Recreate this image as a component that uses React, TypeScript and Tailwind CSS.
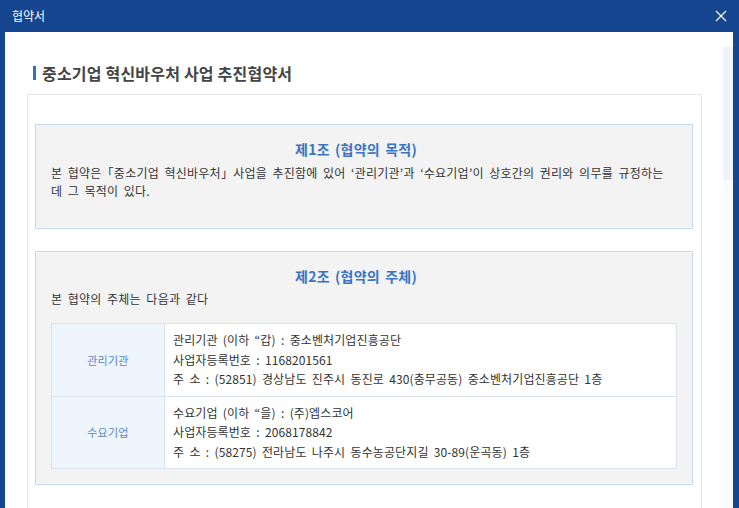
import React from "react";

const rows = [
  {
    label: "관리기관",
    lines: [
      "관리기관 (이하 “갑) : 중소벤처기업진흥공단",
      "사업자등록번호 : 1168201561",
      "주 소 : (52851) 경상남도 진주시 동진로 430(충무공동) 중소벤처기업진흥공단 1층",
    ],
  },
  {
    label: "수요기업",
    lines: [
      "수요기업 (이하 “을) : (주)엡스코어",
      "사업자등록번호 : 2068178842",
      "주 소 : (58275) 전라남도 나주시 동수농공단지길 30-89(운곡동) 1층",
    ],
  },
];

function Article({ title, children }: { title: string; children: React.ReactNode }) {
  return (
    <div className="border border-[#c8dbee] bg-[#f3f3f3] px-[15px] pt-[14px]">
      <h3 className="pr-[16px] text-center text-[14px] font-bold leading-[20px] tracking-[0.2px] text-[#3a74c2] [word-spacing:2px]">
        {title}
      </h3>
      {children}
    </div>
  );
}

export default function App() {
  return (
    <div className="flex h-[508px] w-[739px] flex-col overflow-hidden bg-[#16458f] font-['Noto_Sans_CJK_KR',sans-serif]">
      <div className="flex h-[32px] shrink-0 items-center justify-between pl-[12px] pr-[12px]">
        <span className="text-[12px] text-white">협약서</span>
        <svg width="12" height="12" viewBox="0 0 12 12" className="mt-[-1px]">
          <path d="M1 1 L11 11 M11 1 L1 11" stroke="white" strokeWidth="1.2" />
        </svg>
      </div>

      <div className="ml-[5px] mr-[6px] flex flex-1 bg-white">
        <div className="flex-1 pl-[22px] pr-[21px] pt-[31px]">
          <div className="flex h-[20px] items-center pl-[6px]">
            <span className="h-[14px] w-[3px] bg-[#2f6fc4]" />
            <h2 className="ml-[6px] text-[16px] font-bold tracking-[0.2px] text-[#444]">중소기업 혁신바우처 사업 추진협약서</h2>
          </div>

          <div className="mt-[11px] h-[600px] border border-[#e6e6e6] pl-[7px] pr-[8px] pt-[29px] text-[12px] text-[#333] tracking-[0.25px] [word-spacing:2.5px]">
            <Article title="제1조 (협약의 목적)">
              <p className="mt-[5px] pb-[28px] leading-[18px]">
                본 협약은「중소기업 혁신바우처」사업을 추진함에 있어 ‘관리기관’과 ‘수요기업’이 상호간의 권리와 의무를 규정하는
                <br />데 그 목적이 있다.
              </p>
            </Article>

            <div className="mt-[22px]">
              <Article title="제2조 (협약의 주체)">
                <p className="mt-[4px] leading-[18px]">본 협약의 주체는 다음과 같다</p>
                <div className="mb-[15px] mt-[15px] border border-[#d8e3ef]">
                  {rows.map((row, i) => (
                    <div key={row.label} className={`flex ${i === 0 ? "border-b border-[#d8e3ef]" : ""}`}>
                      <div className="flex w-[113px] shrink-0 items-center justify-center border-r border-[#d8e3ef] bg-[#eef5fd] text-[11px] text-[#5b84be]">
                        {row.label}
                      </div>
                      <div className="flex-1 bg-white pb-[7px] pl-[8px] pt-[6px] leading-[19.5px] tracking-[0.1px]">
                        {row.lines.map((l) => (
                          <div key={l}>{l}</div>
                        ))}
                      </div>
                    </div>
                  ))}
                </div>
              </Article>
            </div>
          </div>
        </div>

        <div className="w-[10px] shrink-0 pt-[15px]">
          <div className="h-[133px] bg-[#eef3fa]" />
          <div className="h-full bg-[#fafbfd]" />
        </div>
      </div>
    </div>
  );
}
